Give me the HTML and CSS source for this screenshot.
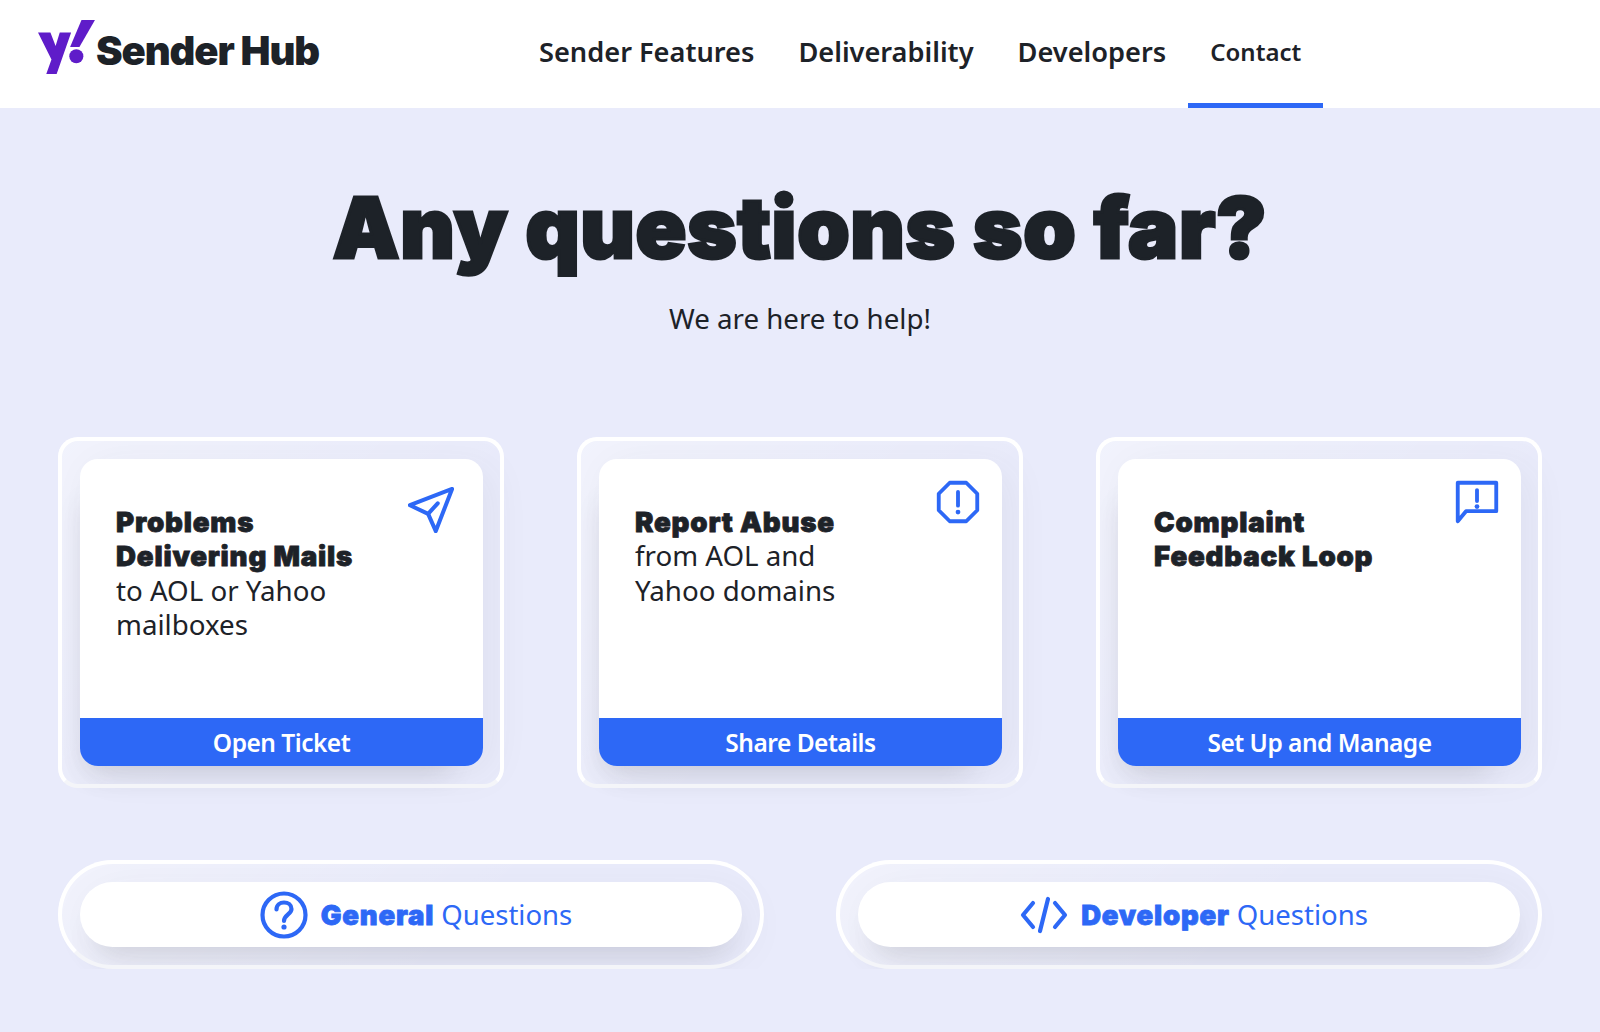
FILE: index.html
```html
<!DOCTYPE html>
<html>
<head>
    <title>Sender Hub - Contact</title>
    <link rel="stylesheet" href="styles.css">
</head>
<body>
    <header class="site-header">
        <a class="logo" href="#">
            <svg class="logo-mark" width="58" height="55" viewBox="0 0 56 53">
                <path class="logo-fill" d="M0 12H12L17 25L21 12H32L18 52H8L13 38Z"/>
                <circle class="logo-fill" cx="37" cy="35" r="6.8"/>
                <path class="logo-fill" d="M42 0H55L40 26H31Z"/>
            </svg>
            <span class="logo-text">Sender Hub</span>
        </a>
        <nav class="main-nav">
            <a class="nav-link" href="#">Sender Features</a>
            <a class="nav-link" href="#">Deliverability</a>
            <a class="nav-link" href="#">Developers</a>
            <a class="nav-link active" href="#">Contact</a>
        </nav>
    </header>

    <main class="content">
        <h1 class="page-title">Any questions so far?</h1>
        <p class="page-sub">We are here to help!</p>

        <section class="cards">
            <div class="card-frame">
                <div class="card">
                    <svg class="card-icon icon-plane" width="46" height="46" viewBox="0 0 48 48">
                        <path d="M46 2L2 19L21 28L29 46Z"/>
                        <path d="M21 28L31 17"/>
                    </svg>
                    <p class="card-text"><b>Problems<br>Delivering Mails</b><br>to AOL or Yahoo<br>mailboxes</p>
                    <a class="card-btn" href="#">Open Ticket</a>
                </div>
            </div>
            <div class="card-frame">
                <div class="card">
                    <svg class="card-icon" width="44" height="44" viewBox="0 0 48 48">
                        <path d="M15 3H33L45 15V33L33 45H15L3 33V15Z"/>
                        <path d="M24 13V28"/>
                        <circle class="dot" cx="24" cy="35" r="2.6"/>
                    </svg>
                    <p class="card-text"><b>Report Abuse</b><br>from AOL and<br>Yahoo domains</p>
                    <a class="card-btn" href="#">Share Details</a>
                </div>
            </div>
            <div class="card-frame">
                <div class="card">
                    <svg class="card-icon" width="44" height="44" viewBox="0 0 48 48">
                        <path d="M3 3H45V34H12L3 45Z"/>
                        <path d="M24 11V23"/>
                        <circle class="dot" cx="24" cy="29" r="2.6"/>
                    </svg>
                    <p class="card-text"><b>Complaint<br>Feedback Loop</b></p>
                    <a class="card-btn" href="#">Set Up and Manage</a>
                </div>
            </div>
        </section>

        <section class="pills">
            <div class="pill-frame">
                <a class="pill" href="#">
                    <svg class="pill-icon" width="48" height="48" viewBox="0 0 48 48">
                        <circle cx="24" cy="24" r="21.5"/>
                        <path d="M16.5 18.5C16.5 14 20 11.5 24 11.5C28 11.5 31.5 14 31.5 18C31.5 23 24 24 24 30"/>
                        <circle class="dot" cx="24" cy="36" r="2.6"/>
                    </svg>
                    <span><b>General</b> Questions</span>
                </a>
            </div>
            <div class="pill-frame">
                <a class="pill" href="#">
                    <svg class="pill-icon" width="48" height="48" viewBox="0 0 48 48">
                        <path d="M13 12L3 24L13 36"/>
                        <path d="M35 12L45 24L35 36"/>
                        <path d="M28 8L20 40"/>
                    </svg>
                    <span><b>Developer</b> Questions</span>
                </a>
            </div>
        </section>
    </main>
</body>
</html>
```

FILE: styles.css
```css
:root {
    --bg-color: #e9ebfb;
    --text-color: #1d2228;
    --accent: #2d68f6;
    --purple: #5f1cc9;
}

* {
    box-sizing: border-box;
}

body {
    margin: 0;
    background: var(--bg-color);
    color: var(--text-color);
    font-family: "Noto Sans", sans-serif;
}

a {
    color: inherit;
    text-decoration: none;
}

b {
    font-family: Inter, sans-serif;
    font-weight: 900;
    letter-spacing: 0.8px;
    line-height: 1;
    -webkit-text-stroke: 0.8px currentColor;
}

/* Header */
.site-header {
    display: flex;
    height: 108px;
    padding-left: 38px;
    background: #fff;
}

.logo {
    display: flex;
    align-items: center;
    width: 280px;
    padding-bottom: 13px;
}

.logo-mark {
    flex-shrink: 0;
}

.logo-fill {
    fill: var(--purple);
}

.logo-text {
    margin-top: 5px;
    font-family: Inter, sans-serif;
    font-size: 40px;
    font-weight: 900;
    letter-spacing: -1.1px;
    white-space: nowrap;
}

.main-nav {
    display: flex;
    margin-left: 199px;
}

.nav-link {
    display: flex;
    align-items: center;
    padding: 0 22px;
    font-size: 27.2px;
    font-weight: 600;
    border-bottom: 5px solid transparent;
}

.nav-link.active {
    font-size: 24px;
    border-bottom-color: var(--accent);
}

/* Title */
.content {
    padding: 0 58px;
}

.page-title {
    margin: 75px 0 0;
    font-family: Inter, sans-serif;
    font-size: 84px;
    font-weight: 900;
    letter-spacing: 0.7px;
    line-height: 90px;
    text-align: center;
    -webkit-text-stroke: 3px currentColor;
}

.page-sub {
    margin: 26px 0 0;
    font-size: 27.7px;
    line-height: 38px;
    text-align: center;
}

/* Cards */
.cards {
    display: grid;
    grid-template-columns: repeat(3, 446px);
    justify-content: space-between;
    margin-top: 100px;
}

.card-frame,
.pill-frame {
    position: relative;
    background: linear-gradient(135deg, rgba(255,255,255,0.4), rgba(255,255,255,0) 60%);
    background-origin: border-box;
    border: 4px solid transparent;
}

/* border sits above the inner shadow */
.card-frame::after,
.pill-frame::after {
    content: "";
    position: absolute;
    inset: -4px;
    border: 4px solid #fff;
    border-bottom-color: #f4f5f9;
    border-radius: inherit;
    pointer-events: none;
}

.card-frame {
    height: 351px;
    padding: 18px 17px 18px 18px;
    border-radius: 20px;
}

.card {
    position: relative;
    display: flex;
    flex-direction: column;
    height: 100%;
    background: #fff;
    border-radius: 18px;
    box-shadow: -14px 26px 26px -20px rgba(60,60,70,0.16), 10px 8px 40px rgba(60,60,70,0.06);
}

.card-icon {
    position: absolute;
    top: 21px;
    right: 22px;
}

.icon-plane {
    top: 28px;
    right: 29px;
}

.card-icon path,
.pill-icon path,
.pill-icon > circle:not(.dot) {
    fill: none;
    stroke: var(--accent);
    stroke-width: 4.2;
    stroke-linejoin: round;
    stroke-linecap: round;
}

.dot {
    fill: var(--accent);
}

.card-text {
    flex: 1;
    margin: 0;
    padding: 45px 0 0 36px;
    font-size: 27.7px;
    line-height: 34.3px;
}

.card-btn {
    height: 48px;
    color: #fff;
    background: var(--accent);
    border-radius: 0 0 18px 18px;
    font-size: 24.5px;
    font-weight: 600;
    letter-spacing: -0.5px;
    line-height: 50px;
    text-align: center;
}

/* Pills */
.pills {
    display: grid;
    grid-template-columns: repeat(2, 706px);
    justify-content: space-between;
    margin-top: 72px;
}

.pill-frame {
    height: 109px;
    padding: 18px;
    border-radius: 55px;
}

.pill {
    display: flex;
    align-items: center;
    justify-content: center;
    gap: 13px;
    height: 100%;
    padding-left: 10px;
    color: var(--accent);
    background: #fff;
    border-radius: 33px;
    font-size: 27.5px;
    box-shadow: 0 24px 28px -14px rgba(60,60,70,0.13), 8px 10px 44px rgba(60,60,70,0.06);
}
```
